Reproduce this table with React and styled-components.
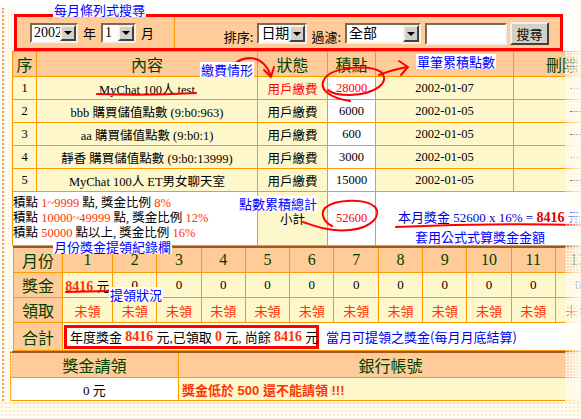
import React from 'react';
import styled, { createGlobalStyle } from 'styled-components';

const C = {
  peach: '#FFCC99',
  cream: '#FFF7CC',
  white: '#FFFFFF',
  orange: '#FF9900',
  green: '#004000',
  red: '#FF0000',
  hot: '#FF3300',
  blue: '#0000FF',
  brown: '#A0581E',
};

const GlobalStyle = createGlobalStyle`
  html, body { margin: 0; padding: 0; background: #fff; }
  body { font-family: "Liberation Serif", "Noto Sans CJK TC", serif; overflow: hidden; }
  #root { width: 581px; height: 419px; }
`;

const Page = styled.div`
  position: relative;
  width: 581px;
  height: 419px;
  overflow: hidden;
  background: #fff;
  padding-top: 14px;
  box-sizing: border-box;
`;

/* ---------- search bar ---------- */
const SearchBar = styled.div`
  margin-left: 14px;
  width: 549px;
  height: 37px;
  box-sizing: border-box;
  border: 3px solid ${C.red};
  background: ${C.peach};
  display: flex;
`;
const SearchLeft = styled.div`
  width: 158px;
  flex: none;
  box-sizing: border-box;
  border-right: 1px solid ${C.orange};
  display: flex;
  align-items: center;
  gap: 5px;
  padding-left: 13px;
`;
const SearchRight = styled.div`
  flex: 1;
  display: flex;
  align-items: center;
  justify-content: flex-end;
  gap: 4px;
  padding-right: 11px;
  padding-top: 2px;
`;
const Word = styled.span`
  font-family: "Noto Sans CJK TC", sans-serif;
  font-size: 13px;
  color: #000;
  line-height: 1;
  padding-top: ${p => (p.$low ? 6 : 0)}px;
`;
const SelectBox = styled.div`
  display: inline-flex;
  width: ${p => p.$w}px;
  height: ${p => p.$h}px;
  box-sizing: border-box;
  border: 2px solid;
  border-color: #7a6a5a #f4f0ea #f4f0ea #7a6a5a;
  background: #fff;
  flex: none;
`;
const NativeSelect = styled.select`
  appearance: none;
  -webkit-appearance: none;
  border: 0;
  outline: 0;
  background: transparent;
  flex: 1;
  min-width: 0;
  margin: 0;
  padding: 0 0 0 2px;
  font-family: "Liberation Serif", "Noto Sans CJK TC", serif;
  font-size: 14px;
  color: #000;
`;
const DropButton = styled.span`
  width: 16px;
  flex: none;
  box-sizing: border-box;
  background: #d4d0c8;
  border: 2px solid;
  border-color: #f4f0ea #404040 #404040 #f4f0ea;
  display: flex;
  align-items: center;
  justify-content: center;
  &::after {
    content: '';
    border-left: 4px solid transparent;
    border-right: 4px solid transparent;
    border-top: 4px solid #000;
  }
`;
const TextInput = styled.input`
  width: 82px;
  height: 22px;
  box-sizing: border-box;
  border: 2px solid;
  border-color: #7a6a5a #f4f0ea #f4f0ea #7a6a5a;
  background: #fff;
  margin: 0;
  padding: 0 2px;
  flex: none;
`;
const SearchButton = styled.button`
  width: 39px;
  height: 23px;
  box-sizing: border-box;
  background: #d4d0c8;
  border: 2px solid;
  border-color: #f4f0ea #404040 #404040 #f4f0ea;
  font-family: "Noto Sans CJK TC", sans-serif;
  font-size: 13px;
  color: #000;
  padding: 0;
  margin: 0 0 0 -1px;
  flex: none;
`;

function Select({ w, h = 20, value }) {
  return (
    <SelectBox $w={w} $h={h}>
      <NativeSelect defaultValue={value}>
        <option value={value}>{value}</option>
      </NativeSelect>
      <DropButton />
    </SelectBox>
  );
}

/* ---------- tables ---------- */
const Table = styled.table`
  margin-left: ${p => p.$x}px;
  width: ${p => p.$w}px;
  border-collapse: collapse;
  table-layout: fixed;
  border-top: ${p => (p.$brown ? `2px solid ${C.brown}` : `1px solid ${C.orange}`)};
`;
const Row = styled.tr`
  height: ${p => p.$h}px;
`;
const Head = styled.th`
  background: ${C.peach};
  color: ${C.green};
  font-family: "Liberation Serif", "Noto Sans CJK TC", serif;
  font-size: 16px;
  font-weight: normal;
  border: 1px solid ${C.orange};
  padding: 0;
  text-align: center;
  white-space: nowrap;
  overflow: hidden;
`;
const Cell = styled.td`
  background: ${p => C[p.$bg || 'cream']};
  color: ${p => (p.$color ? C[p.$color] : '#000')};
  font-size: ${p => p.$size || 12.5}px;
  text-align: ${p => p.$align || 'center'};
  vertical-align: ${p => p.$valign || 'middle'};
  border: 1px solid ${C.orange};
  padding: 0 ${p => p.$pad || 0}px;
  white-space: nowrap;
  overflow: hidden;
`;
const Legend = styled.div`
  font-size: 12.5px;
  line-height: 15px;
  color: #000;
`;
const Hot = styled.span`
  color: ${C.hot};
`;
const Formula = styled.div`
  color: #0000CC;
  font-size: 13px;
  line-height: 15px;
  padding-top: 18px;
  margin-left: 22px;
`;
const BoldNum = styled.b`
  color: ${p => (p.$red ? '#E00000' : C.hot)};
  font-family: "Liberation Serif", serif;
  font-size: 14px;
  font-weight: 700;
`;
const SumWrap = styled.div`
  display: flex;
  align-items: center;
  gap: 7px;
  padding-left: 1px;
`;
const SumBox = styled.div`
  width: 255px;
  height: 24px;
  box-sizing: border-box;
  border: 3px solid ${C.red};
  background: #fff;
  display: flex;
  align-items: center;
  padding-left: 3px;
  font-size: 13px;
  white-space: nowrap;
`;
const BlueText = styled.span`
  color: #0000EE;
  font-family: "Noto Sans CJK TC", sans-serif;
  font-size: 13px;
`;
const Warn = styled.b`
  color: ${C.hot};
  font-family: "Liberation Sans", "Noto Sans CJK TC", sans-serif;
  font-size: 13px;
  font-weight: 700;
`;

/* ---------- annotations ---------- */
const Ink = styled.svg`
  position: absolute;
  left: 0;
  top: 0;
  pointer-events: none;
`;
const Note = styled.span`
  position: absolute;
  left: ${p => p.$x}px;
  top: ${p => p.$y}px;
  background: #fff;
  color: ${C.blue};
  font-family: "Noto Sans CJK TC", sans-serif;
  font-size: 13px;
  line-height: 15px;
  padding: 0 1px;
  white-space: nowrap;
`;
const EdgeRight = styled.div`
  position: absolute;
  right: 0;
  top: 0;
  width: 16px;
  height: 100%;
  background-image:
    radial-gradient(circle, rgba(255, 255, 255, 0.9) 0.8px, transparent 1.3px),
    linear-gradient(to right, rgba(255, 248, 225, 0.15), rgba(255, 250, 235, 0.85));
  background-size: 3px 3px, 100% 100%;
`;
const EdgeLeft = styled.div`
  position: absolute;
  left: 0;
  top: 8px;
  width: 10px;
  height: 396px;
  box-sizing: border-box;
  border-left: 2px dotted #E8A45A;
  margin-left: 2px;
  background-image:
    radial-gradient(circle, rgba(255, 240, 200, 0.9) 0.8px, transparent 1.3px);
  background-size: 3px 3px;
`;
const EdgeBottom = styled.div`
  position: absolute;
  left: 0;
  bottom: 0;
  width: 100%;
  height: 18px;
  background-image:
    radial-gradient(circle, rgba(245, 225, 170, 0.7) 0.8px, transparent 1.3px),
    linear-gradient(to bottom, rgba(255, 250, 230, 0.9), rgba(255, 255, 255, 1));
  background-size: 4px 4px, 100% 100%;
`;

const rows = [
  { n: 1, c: 'MyChat 100人 test', p: '28000', d: '2002-01-07', red: true },
  { n: 2, c: 'bbb 購買儲值點數 (9:b0:963)', p: '6000', d: '2002-01-05' },
  { n: 3, c: 'aa 購買儲值點數 (9:b0:1)', p: '600', d: '2002-01-05' },
  { n: 4, c: '靜香 購買儲值點數 (9:b0:13999)', p: '3000', d: '2002-01-05' },
  { n: 5, c: 'MyChat 100人 ET男女聊天室', p: '15000', d: '2002-01-05' },
];

const months = Array.from({ length: 12 }, (_, i) => i + 1);

export default function App() {
  return (
    <>
      <GlobalStyle />
      <Page>
        <SearchBar>
          <SearchLeft>
            <Select w={48} value="2002" />
            <Word>年</Word>
            <Select w={35} value="1" />
            <Word>月</Word>
          </SearchLeft>
          <SearchRight>
            <Word $low>排序:</Word>
            <Select w={50} h={21} value="日期" />
            <Word $low>過濾:</Word>
            <Select w={76} h={21} value="全部" />
            <TextInput />
            <SearchButton>搜尋</SearchButton>
          </SearchRight>
        </SearchBar>

        <Table $x={12} $w={598}>
          <colgroup>
            <col style={{ width: 24 }} />
            <col style={{ width: 221 }} />
            <col style={{ width: 70 }} />
            <col style={{ width: 48 }} />
            <col style={{ width: 138 }} />
            <col style={{ width: 97 }} />
          </colgroup>
          <tbody>
            <Row $h={25}>
              <Head>序</Head>
              <Head>內容</Head>
              <Head>狀態</Head>
              <Head>積點</Head>
              <Head />
              <Head>刪除</Head>
            </Row>
            {rows.map(r => (
              <Row $h={23} key={r.n}>
                <Cell>{r.n}</Cell>
                <Cell>{r.c}</Cell>
                <Cell $color={r.red ? 'red' : undefined}>用戶繳費</Cell>
                <Cell $bg="white" $color={r.red ? 'red' : undefined}>{r.p}</Cell>
                <Cell>{r.d}</Cell>
                <Cell $pad={28} $align="right">---</Cell>
              </Row>
            ))}
            <Row $h={54}>
              <Cell colSpan={2} $bg="white" $align="left">
                <Legend>
                  <div>積點 <Hot>1~9999</Hot> 點, 獎金比例 <Hot>8%</Hot></div>
                  <div>積點 <Hot>10000~49999</Hot> 點, 獎金比例 <Hot>12%</Hot></div>
                  <div>積點 <Hot>50000</Hot> 點以上, 獎金比例 <Hot>16%</Hot></div>
                </Legend>
              </Cell>
              <Cell>小計</Cell>
              <Cell $bg="white" $color="red">52600</Cell>
              <Cell colSpan={2} $bg="white" $align="left" $valign="top">
                <Formula>
                  本月獎金 52600 x 16% = <BoldNum $red>8416</BoldNum> 元
                </Formula>
              </Cell>
            </Row>
          </tbody>
        </Table>

        <Table $x={13} $w={587} $brown>
          <colgroup>
            <col style={{ width: 49 }} />
            <col style={{ width: 50 }} />
            {months.slice(1, 11).map(m => (
              <col key={m} style={{ width: 44.3 }} />
            ))}
            <col style={{ width: 45 }} />
          </colgroup>
          <tbody>
            <Row $h={25}>
              <Head>月份</Head>
              {months.map(m => (
                <Head key={m}>{m}</Head>
              ))}
            </Row>
            <Row $h={25}>
              <Head>獎金</Head>
              {months.map(m => (
                <Cell key={m} $size={13}>
                  {m === 1 ? (
                    <>
                      <BoldNum>8416</BoldNum> 元
                    </>
                  ) : (
                    '0'
                  )}
                </Cell>
              ))}
            </Row>
            <Row $h={25}>
              <Head>領取</Head>
              {months.map(m => (
                <Cell key={m} $size={13} $color="hot">
                  未領
                </Cell>
              ))}
            </Row>
            <Row $h={28}>
              <Head>合計</Head>
              <Cell colSpan={12} $bg="white" $align="left">
                <SumWrap>
                  <SumBox>
                    年度獎金&nbsp;<BoldNum>8416</BoldNum>&nbsp;元,已領取&nbsp;<BoldNum>0</BoldNum>&nbsp;元, 尚餘&nbsp;
                    <BoldNum>8416</BoldNum>&nbsp;元
                  </SumBox>
                  <BlueText>當月可提領之獎金(每月月底結算)</BlueText>
                </SumWrap>
              </Cell>
            </Row>
          </tbody>
        </Table>

        <Table $x={10} $w={592} $brown>
          <colgroup>
            <col style={{ width: 168 }} />
            <col style={{ width: 424 }} />
          </colgroup>
          <tbody>
            <Row $h={25}>
              <Head>獎金請領</Head>
              <Head>銀行帳號</Head>
            </Row>
            <Row $h={23}>
              <Cell $bg="white" $size={13}>0 元</Cell>
              <Cell $align="left" $pad={3}>
                <Warn>獎金低於 500 還不能請領 !!!</Warn>
              </Cell>
            </Row>
          </tbody>
        </Table>

        <Ink width="581" height="419" viewBox="0 0 581 419">
          <g fill="none" stroke="#FF0000" strokeWidth="2" strokeLinecap="round" strokeLinejoin="round">
            <path d="M97,94 Q146,96 196,93" />
            <path d="M232,66 C242,56 262,52 271,76" />
            <path d="M264,70 L271,77 L274,67" />
            <path d="M350,101 C330,98 317,89 325,78 C333,67 370,64 381,72 C391,82 376,94 350,95 C339,95 331,93 328,90" />
            <path d="M379,75 C389,71 397,69 407,67" />
            <path d="M399,61 L408,67 L401,75" />
            <path d="M303,222 C315,226 330,232 350,230 C372,228 382,215 375,207 C366,198 335,199 325,208 C320,214 324,222 332,226" />
            <path d="M396,227 Q490,223 581,225" />
            <path d="M66,292 L108,291" />
          </g>
        </Ink>

        <Note $x={53} $y={2}>每月條列式搜尋</Note>
        <Note $x={200} $y={62}>繳費情形</Note>
        <Note $x={416} $y={54}>單筆累積點數</Note>
        <Note $x={238} $y={196}>點數累積總計</Note>
        <Note $x={414} $y={229}>套用公式式算獎金金額</Note>
        <Note $x={53} $y={239}>月份獎金提領紀錄欄</Note>
        <Note $x={109} $y={287}>提領狀況</Note>

        <EdgeLeft />
        <EdgeRight />
        <EdgeBottom />
      </Page>
    </>
  );
}
